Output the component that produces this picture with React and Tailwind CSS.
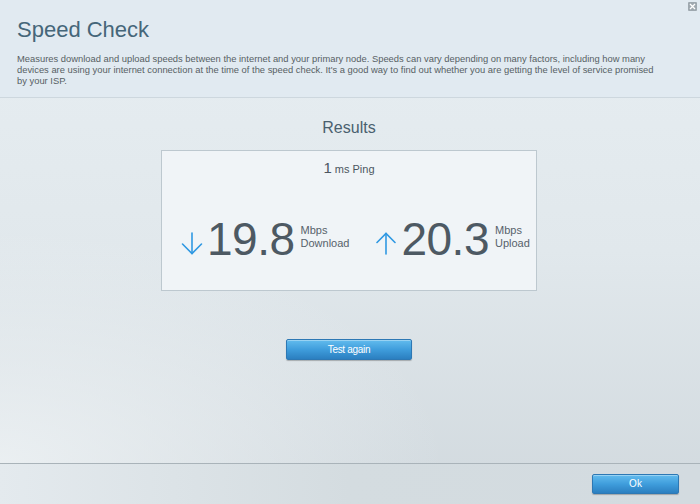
import React from "react";

function ArrowDown() {
  return (
    <svg width="22" height="23" viewBox="0 0 22 23" fill="none" stroke="#2f98e2" strokeWidth="1.6" strokeLinecap="round">
      <path d="M11 1 V21.5" />
      <path d="M1.5 12 L11 21.5 L20.5 12" />
    </svg>
  );
}

function ArrowUp() {
  return (
    <svg width="20" height="23" viewBox="0 0 20 23" fill="none" stroke="#2f98e2" strokeWidth="1.6" strokeLinecap="round">
      <path d="M10 22 V1.5" />
      <path d="M1 10.5 L10 1.5 L19 10.5" />
    </svg>
  );
}

function BlueButton({ children, className }) {
  return (
    <button
      className={
        "flex items-center justify-center rounded-[2px] border border-[#2d78b4] bg-gradient-to-b from-[#62bcee] via-[#3f9ddc] to-[#2b7fc0] text-white shadow-[0_1px_1px_rgba(0,0,0,0.25),inset_0_1px_0_rgba(255,255,255,0.35)] " +
        className
      }
    >
      {children}
    </button>
  );
}

export default function App() {
  return (
    <div
      className="relative flex h-[504px] w-[700px] flex-col overflow-hidden bg-gradient-to-b from-[#e7eef2] via-[#e1e8ec] to-[#d1d9de]"
      style={{ fontFamily: '"Liberation Sans", Arial, sans-serif' }}
    >
      {/* close icon */}
      <div className="absolute right-[3px] top-[2px] flex h-[9px] w-[9px] items-center justify-center rounded-[1px] bg-[#9ea8af]">
        <svg width="7" height="7" viewBox="0 0 7 7" stroke="white" strokeWidth="1.3">
          <path d="M1 1 L6 6 M6 1 L1 6" />
        </svg>
      </div>

      {/* header */}
      <div className="h-[98px] shrink-0 border-b border-[#cdd7de] bg-[#e1eaf1] px-[17px] pt-[17px]">
        <h1 className="text-[22px] leading-[26px] text-[#456679]">Speed Check</h1>
        <p className="mt-[10px] whitespace-nowrap text-[9.4px] leading-[11px] text-[#575f64]">
          Measures download and upload speeds between the internet and your primary node. Speeds can vary depending on many factors, including how many
          <br />
          devices are using your internet connection at the time of the speed check. It's a good way to find out whether you are getting the level of service promised
          <br />
          by your ISP.
        </p>
      </div>

      {/* main */}
      <div className="flex flex-1 flex-col items-center bg-[radial-gradient(ellipse_at_0%_100%,rgba(240,244,246,0.8),rgba(240,244,246,0)_45%)] pr-[2px] pt-[20px]">
        <div className="text-[16px] leading-[20px] text-[#4a606e]">Results</div>
        <div className="mt-[12px] h-[141px] w-[376px] border border-[#bdc8cf] bg-[#f0f4f7] pt-[7px]">
          <div className="flex items-baseline justify-center text-[#4c5660]">
            <span className="text-[15px] leading-[20px]">1</span>
            <span className="ml-[3px] text-[11px] leading-[20px]">ms Ping</span>
          </div>
          <div className="mt-[37px] flex items-end pl-[19px] text-[#4d5963]">
            <div className="mb-[7px]">
              <ArrowDown />
            </div>
            <span className="ml-[4px] text-[46px] leading-[46px] tracking-[-0.5px]">19.8</span>
            <div className="mb-[12px] ml-[6px] text-[11px] leading-[13px] text-[#57626b]">
              <div>Mbps</div>
              <div>Download</div>
            </div>
            <div className="mb-[7px] ml-[27px]">
              <ArrowUp />
            </div>
            <span className="ml-[5px] text-[46px] leading-[46px] tracking-[-0.5px]">20.3</span>
            <div className="mb-[12px] ml-[6px] text-[11px] leading-[13px] text-[#57626b]">
              <div>Mbps</div>
              <div>Upload</div>
            </div>
          </div>
        </div>
        <BlueButton className="mt-[48px] h-[21px] w-[126px] text-[10px] tracking-[-0.3px]">Test again</BlueButton>
      </div>

      {/* footer */}
      <div className="flex h-[41px] shrink-0 items-center justify-end border-t border-[#a9b3b9] bg-gradient-to-r from-[#e4eaee] via-[#d4dce0] to-[#d3dbe0] pr-[21px]">
        <BlueButton className="mt-[-1px] h-[20px] w-[87px] text-[10px]">Ok</BlueButton>
      </div>
    </div>
  );
}
